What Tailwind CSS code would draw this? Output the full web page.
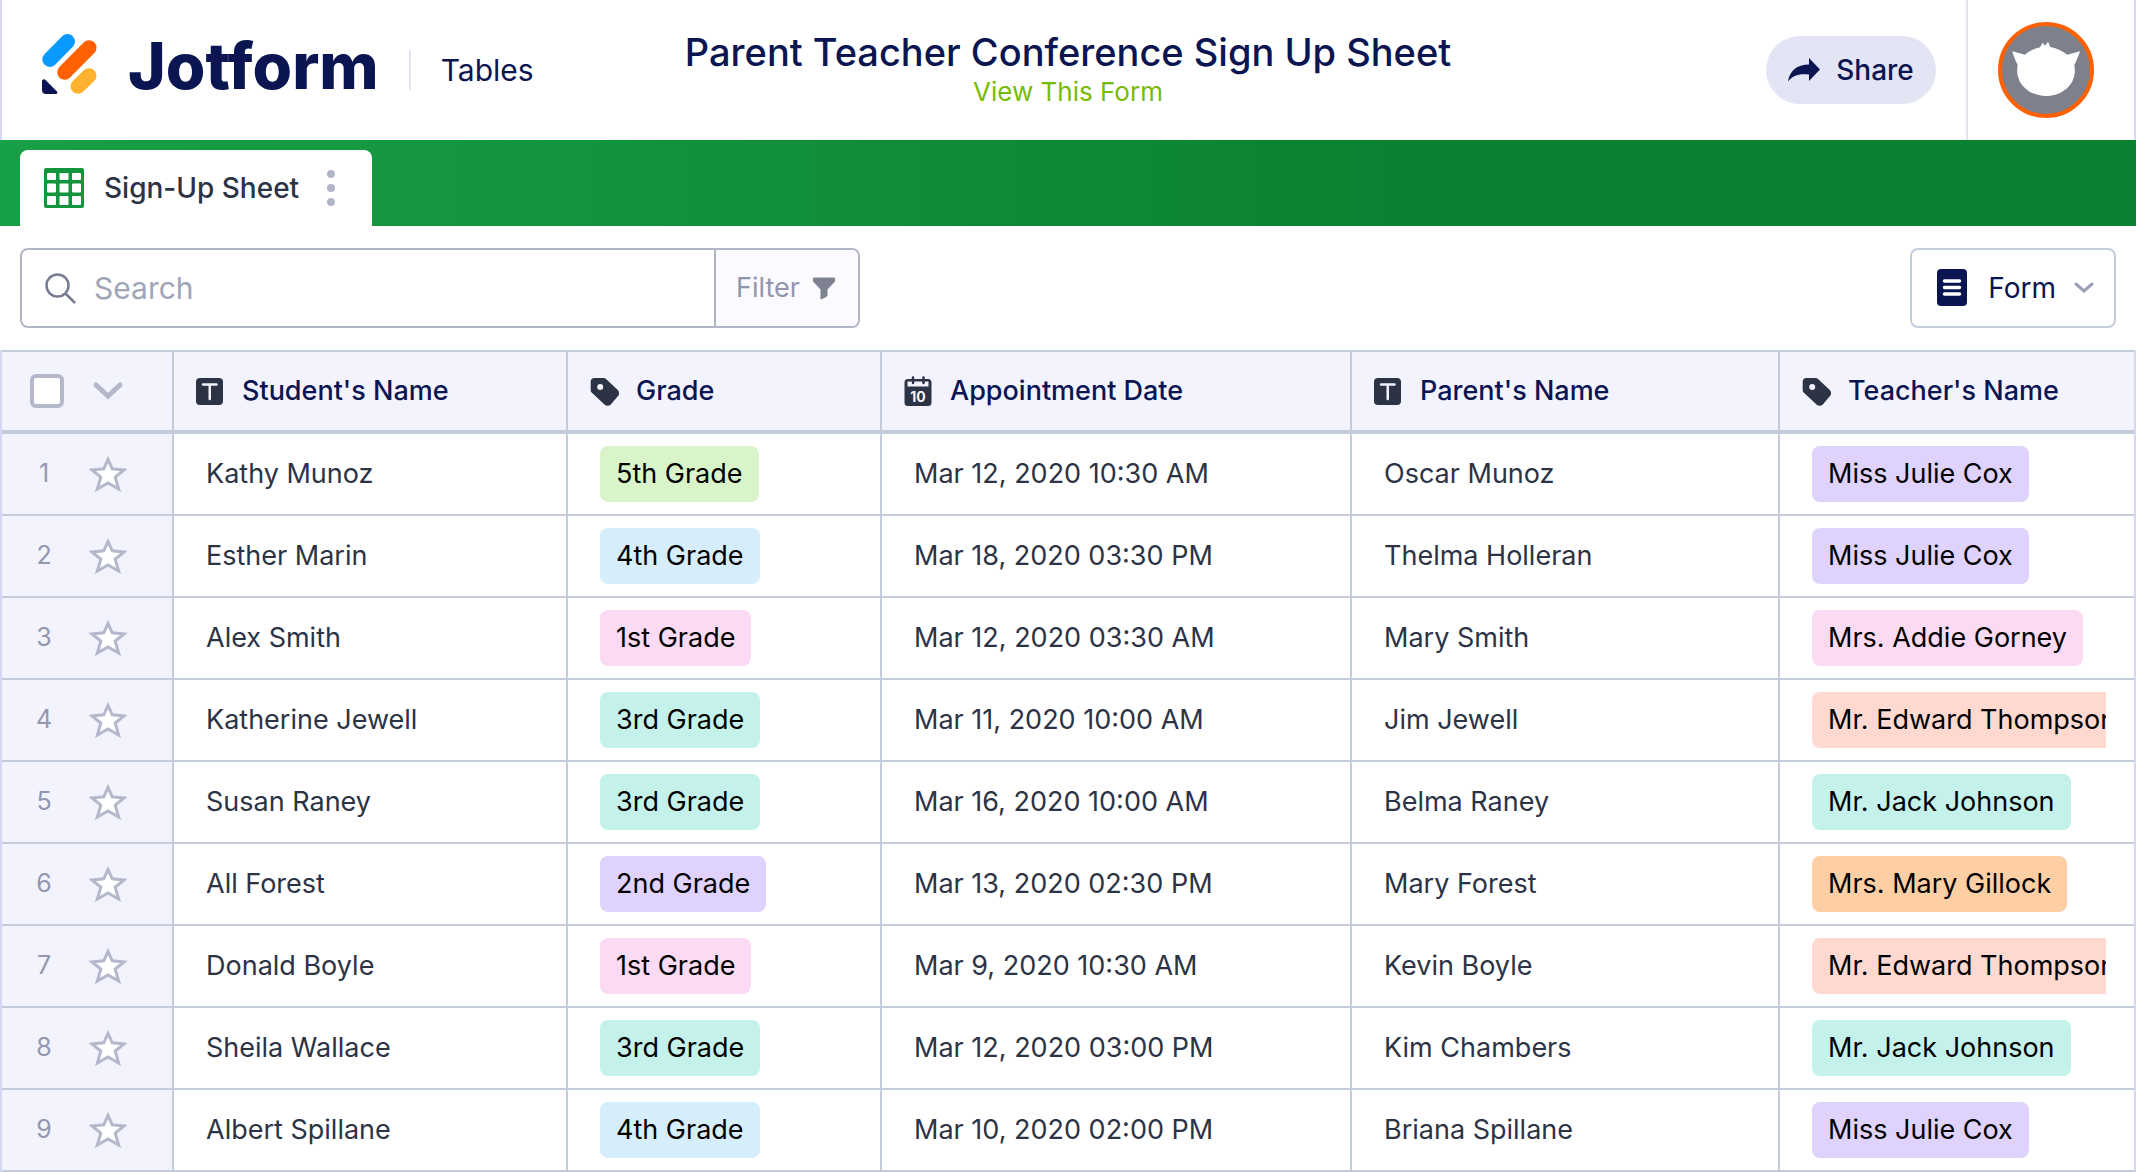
<!DOCTYPE html>
<html lang="en">
  <head>
    <meta charset="UTF-8" />
    <meta name="viewport" content="width=device-width, initial-scale=1.0" />
    <title>Parent Teacher Conference Sign Up Sheet</title>
    <script src="https://cdn.jsdelivr.net/npm/@tailwindcss/browser@4"></script>
  </head>
  <body class="bg-white font-['Inter','Liberation_Sans',sans-serif] text-[#2c3345]">
    <!-- icons shared by the table cells -->
    <svg class="hidden">
      <symbol id="icon-text" viewBox="0 0 28 28">
        <rect x="0" y="1" width="27" height="27" rx="4" fill="#2c3345" />
        <path d="M7 7.500H20.500M13.750 7.500V22" fill="none" stroke="#f3f3fe" stroke-width="2.500" stroke-linecap="round" />
      </symbol>
      <symbol id="icon-tag" viewBox="0 0 30 30">
        <path fill="#2c3345" fill-rule="evenodd" d="M4.500 2H13.500a4 4 0 0 1 2.800 1.200L27.800 14a4.500 4.500 0 0 1 0 6.300L20.800 28.500a4.500 4.500 0 0 1-6.300 0L1.900 16.800A3.500 3.500 0 0 1 .7 14V5.800A3.800 3.800 0 0 1 4.500 2ZM10.200 8a3 3 0 1 0 0 6 3 3 0 0 0 0-6Z" />
      </symbol>
      <symbol id="icon-date" viewBox="0 0 28 30">
        <path fill="#2c3345" fill-rule="evenodd" d="M4 3H24a3.500 3.500 0 0 1 3.500 3.500V26.500A3.500 3.500 0 0 1 24 30H4A3.500 3.500 0 0 1 .5 26.500V6.500A3.500 3.500 0 0 1 4 3ZM3.500 5.500V10.500H24.500V5.500Z" />
        <path d="M9 1.500V7M19.500 1.500V7" stroke="#2c3345" stroke-width="2.500" stroke-linecap="round" />
        <text x="14" y="25.500" text-anchor="middle" font-size="14" font-weight="700" fill="#f3f3fe">10</text>
      </symbol>
      <symbol id="icon-star" viewBox="0 0 38 36">
        <path d="M19 3.500L23.300 12.800L35 14L26.200 21L29.600 33L19 27L8.400 33L11.800 21L3 14L14.700 12.800Z" fill="#fff" stroke="#b4b8ca" stroke-width="3" />
      </symbol>
    </svg>

    <header class="grid h-[140px] grid-cols-[1fr_auto_1fr] border-x-2 border-[#d5d8f0]">
      <div class="flex items-center pl-10">
        <a href="#" class="flex items-center gap-[30px]" aria-label="Jotform">
          <svg class="mb-3 h-[60px] w-[56px]" viewBox="0 0 56 60" fill="none" stroke-linecap="round" stroke-width="15">
            <path d="M25.500 7.500L7.800 25.500" stroke="#0a99ff" />
            <path d="M47 13.700L22.700 38.300" stroke="#ff6100" />
            <path d="M47 41.700L36 52.300" stroke="#ffb230" />
            <path d="M0 47.500a2 2 0 0 1 3.500-1.500L15 57.500a1.500 1.500 0 0 1-1 2.500H4a4 4 0 0 1-4-4Z" fill="#0a1551" />
          </svg>
          <span class="pb-2 text-[64px] leading-[64px] font-extrabold text-[#0a1551]">Jotform</span>
        </a>
        <a href="#" class="ml-[30px] flex h-10 items-center border-l-2 border-[#e3e5f5] pl-[30px] text-[30px] text-[#0a1551]">Tables</a>
      </div>
      <div class="flex flex-col items-center pt-8">
        <h1 class="text-[38px] leading-10 font-medium text-[#0a1551]">Parent Teacher Conference Sign Up Sheet</h1>
        <a href="#" class="text-[26px] leading-10 text-[#78bb07]">View This Form</a>
      </div>
      <div class="flex items-center justify-end">
        <button class="mr-[30px] flex h-[68px] w-[170px] items-center justify-center gap-4 rounded-full bg-[#e3e5f5] text-[28px] font-medium text-[#0a1551]">
          <svg class="h-6 w-8" viewBox="0 0 32 24" fill="#0a1551">
            <path d="M21 0L32 11.500L21 23V16.500C11 15.500 5 17 0 23.500C1.500 13 9 6.500 21 6.500Z" />
          </svg>
          Share
        </button>
        <div class="flex h-full items-center border-l-2 border-[#e3e5f0] pr-10 pl-[30px]">
          <button class="size-24 rounded-full" aria-label="Account">
            <svg viewBox="0 0 96 96">
              <circle cx="48" cy="48" r="46" fill="#7e818c" stroke="#ff6100" stroke-width="4" />
              <path d="M14.300 29.300L27 32.700C31 29 36 26.500 42 25.200L44.700 20.700L47 23.700L50 19.700L52.300 24.900C59 26 65 29 69.300 32.700L82 29.300C80.500 34 78.500 39 76.300 43C80 61 65 74 48 74S16 61 19.700 43C17.500 39 15.500 34 14.300 29.300Z" fill="#fff" />
            </svg>
          </button>
        </div>
      </div>
    </header>

    <nav class="flex h-[86px] items-end bg-linear-to-r from-[#18a046] via-[#0a8231] via-65% to-[#0a8231] pl-5">
      <div class="flex h-[76px] w-[352px] items-center rounded-t-lg bg-white pl-6">
        <svg class="size-10 shrink-0" viewBox="0 0 40 40">
          <rect width="40" height="40" rx="2" fill="#12953c" />
          <g fill="#fff">
            <rect x="3" y="5" width="9" height="7" rx="1" /><rect x="15.500" y="5" width="9" height="7" rx="1" /><rect x="28" y="5" width="9" height="7" rx="1" />
            <rect x="3" y="15.500" width="9" height="9" rx="1" /><rect x="15.500" y="15.500" width="9" height="9" rx="1" /><rect x="28" y="15.500" width="9" height="9" rx="1" />
            <rect x="3" y="28" width="9" height="9" rx="1" /><rect x="15.500" y="28" width="9" height="9" rx="1" /><rect x="28" y="28" width="9" height="9" rx="1" />
          </g>
        </svg>
        <a href="#" class="ml-5 text-[28px] font-medium whitespace-nowrap">Sign-Up Sheet</a>
        <button class="mr-[37px] ml-auto" aria-label="Tab options">
          <svg class="h-9 w-2" viewBox="0 0 8 36" fill="#b1b5c8">
            <circle cx="4" cy="4" r="4" /><circle cx="4" cy="18" r="4" /><circle cx="4" cy="32" r="4" />
          </svg>
        </button>
      </div>
    </nav>

    <div class="flex items-center justify-between px-5 pt-[22px] pb-[22px]">
      <div class="flex h-20 w-[840px] overflow-hidden rounded-lg border-2 border-[#b1b5c8]">
        <label for="search" class="flex items-center pl-[22px]">
          <svg class="size-8" viewBox="0 0 32 32" fill="none" stroke="#757b92" stroke-width="2.500">
            <circle cx="13.500" cy="13.500" r="11" /><path d="M21.500 21.500L31 31" />
          </svg>
        </label>
        <input id="search" type="text" placeholder="Search" class="min-w-0 flex-1 pl-[18px] text-[30px] outline-none placeholder:text-[#a0a5b8]" />
        <button class="flex w-[144px] items-center gap-3 border-l-2 border-[#b1b5c8] bg-[#fafaff] pl-5 text-[27px] text-[#9196ad]">
          Filter
          <svg class="h-6 w-6" viewBox="0 0 24 24" fill="#7e8293">
            <path d="M1.500 2H22.500V5.500L15 13.500V20L9 23V13.500L1.500 5.500Z" stroke="#7e8293" stroke-linejoin="round" />
          </svg>
        </button>
      </div>
      <button class="flex h-20 items-center rounded-lg border-2 border-[#c4cbdb] pr-5 pl-6 text-[28px] text-[#0a1551]">
        <svg class="h-[38px] w-[32px]" viewBox="0 0 32 38">
          <rect x="1" width="30" height="37" rx="4" fill="#0a1551" />
          <path d="M8.500 12H23.500M8.500 18.500H23.500M8.500 25H23.500" stroke="#fff" stroke-width="3.500" stroke-linecap="round" />
        </svg>
        <span class="ml-5">Form</span>
        <svg class="ml-[18px] h-3 w-5" viewBox="0 0 20 12" fill="none" stroke="#9a9fb8" stroke-width="3">
          <path d="M2 2L10 9L18 2" stroke-linecap="round" />
        </svg>
      </button>
    </div>

    <table class="w-full table-fixed border-separate border-spacing-0 border-x-2 border-[#d5d8f0]">
      <thead class="bg-[#f3f3fe] text-left text-[27px] text-[#0a1551]">
        <tr class="h-[84px]">
          <th class="w-[172px] border-t-2 border-r-2 border-b-4 border-[#c4cbdb] p-0">
            <div class="flex items-center gap-7 pl-7">
              <input type="checkbox" aria-label="Select all rows" class="size-[34px] appearance-none rounded-md border-4 border-[#b4b8ca] bg-white" />
              <button aria-label="Selection options">
                <svg class="h-5 w-8" viewBox="0 0 32 20" fill="none" stroke="#b4b8ca" stroke-width="5" stroke-linecap="round">
                  <path d="M4 4L16 15L28 4" />
                </svg>
              </button>
            </div>
          </th>
          <th class="w-[394px] border-t-2 border-r-2 border-b-4 border-[#c4cbdb] p-0 font-medium">
            <div class="flex items-center gap-[18px] pl-[22px]"><svg class="size-7"><use href="#icon-text" /></svg>Student's Name</div>
          </th>
          <th class="w-[314px] border-t-2 border-r-2 border-b-4 border-[#c4cbdb] p-0 font-medium">
            <div class="flex items-center gap-4 pl-[22px]"><svg class="size-[30px]"><use href="#icon-tag" /></svg>Grade</div>
          </th>
          <th class="w-[470px] border-t-2 border-r-2 border-b-4 border-[#c4cbdb] p-0 font-medium">
            <div class="flex items-center gap-[18px] pl-[22px]"><svg class="h-[30px] w-7"><use href="#icon-date" /></svg>Appointment Date</div>
          </th>
          <th class="w-[428px] border-t-2 border-r-2 border-b-4 border-[#c4cbdb] p-0 font-medium">
            <div class="flex items-center gap-[18px] pl-[22px]"><svg class="size-7"><use href="#icon-text" /></svg>Parent's Name</div>
          </th>
          <th class="border-t-2 border-b-4 border-[#c4cbdb] p-0 font-medium">
            <div class="flex items-center gap-4 pl-[22px]"><svg class="size-[30px]"><use href="#icon-tag" /></svg>Teacher's Name</div>
          </th>
        </tr>
      </thead>
      <tbody id="rows" class="text-[27px]"></tbody>
    </table>
  </body>
  <script>
    const colors = {
      "1st Grade": "bg-[#fbdaf3]",
      "2nd Grade": "bg-[#dfd2fd]",
      "3rd Grade": "bg-[#c4f1ea]",
      "4th Grade": "bg-[#d6edfc]",
      "5th Grade": "bg-[#daf4ca]",
      "Miss Julie Cox": "bg-[#dfd2fd]",
      "Mrs. Addie Gorney": "bg-[#fbdaf3]",
      "Mr. Edward Thompson": "bg-[#ffd8d0]",
      "Mr. Jack Johnson": "bg-[#c4f1ea]",
      "Mrs. Mary Gillock": "bg-[#fecfa4]",
    };

    const rows = [
      ["Kathy Munoz", "5th Grade", "Mar 12, 2020 10:30 AM", "Oscar Munoz", "Miss Julie Cox"],
      ["Esther Marin", "4th Grade", "Mar 18, 2020 03:30 PM", "Thelma Holleran", "Miss Julie Cox"],
      ["Alex Smith", "1st Grade", "Mar 12, 2020 03:30 AM", "Mary Smith", "Mrs. Addie Gorney"],
      ["Katherine Jewell", "3rd Grade", "Mar 11, 2020 10:00 AM", "Jim Jewell", "Mr. Edward Thompson"],
      ["Susan Raney", "3rd Grade", "Mar 16, 2020 10:00 AM", "Belma Raney", "Mr. Jack Johnson"],
      ["All Forest", "2nd Grade", "Mar 13, 2020 02:30 PM", "Mary Forest", "Mrs. Mary Gillock"],
      ["Donald Boyle", "1st Grade", "Mar 9, 2020 10:30 AM", "Kevin Boyle", "Mr. Edward Thompson"],
      ["Sheila Wallace", "3rd Grade", "Mar 12, 2020 03:00 PM", "Kim Chambers", "Mr. Jack Johnson"],
      ["Albert Spillane", "4th Grade", "Mar 10, 2020 02:00 PM", "Briana Spillane", "Miss Julie Cox"],
    ];

    const cell = "border-r-2 border-b-2 border-[#c4cbdb] px-8 py-0";

    // long names run past the cell and are clipped at its padding
    function pill(text) {
      return `<div class="overflow-hidden"><span class="inline-flex h-14 items-center rounded-lg px-4 align-top whitespace-nowrap text-black ${colors[text]}">${text}</span></div>`;
    }

    document.querySelector("#rows").innerHTML = rows
      .map(
        ([student, grade, date, parent, teacher], i) => `
        <tr class="h-[82px]">
          <td class="border-r-2 border-b-2 border-[#c4cbdb] bg-[#f3f3fe] p-0">
            <div class="flex items-center pl-[22px]">
              <span class="w-10 text-center text-[25px] text-[#9397ae]">${i + 1}</span>
              <button class="ml-[25px]" aria-label="Star row ${i + 1}"><svg class="h-9 w-[38px]"><use href="#icon-star" /></svg></button>
            </div>
          </td>
          <td class="${cell}">${student}</td>
          <td class="${cell}">${pill(grade)}</td>
          <td class="${cell}">${date}</td>
          <td class="${cell}">${parent}</td>
          <td class="border-b-2 border-[#c4cbdb] py-0 pr-7 pl-8">${pill(teacher)}</td>
        </tr>`
      )
      .join("");
  </script>
</html>
